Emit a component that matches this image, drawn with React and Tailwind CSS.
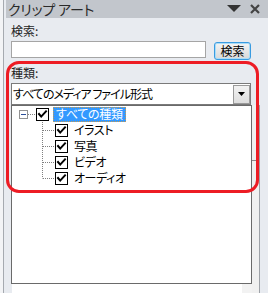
import React from "react";

const font = "font-['Noto_Sans_CJK_JP','Noto_Sans',sans-serif]";

function Check() {
  return (
    <svg width="13" height="13" viewBox="0 0 13 13" className="shrink-0">
      <rect x="0.5" y="0.5" width="12" height="12" fill="#fff" stroke="#000" />
      <polyline
        points="3,6 5.2,8.6 10,3.4"
        fill="none"
        stroke="#000"
        strokeWidth="2"
        strokeLinecap="square"
      />
    </svg>
  );
}

function Child({ label, last }) {
  return (
    <div className="flex items-center h-[16px]">
      <div className="w-[30px] shrink-0" />
      <svg width="13" height="16" viewBox="0 0 13 16" className="shrink-0">
        <line
          x1="0.5"
          y1="0"
          x2="0.5"
          y2={last ? 8.5 : 16}
          stroke="#808080"
          strokeDasharray="1 1"
        />
        <line x1="1" y1="8.5" x2="13" y2="8.5" stroke="#808080" strokeDasharray="1 1" />
      </svg>
      <Check />
      <span className="ml-[6px] text-[12px] tracking-[-0.4px] leading-none text-black">{label}</span>
    </div>
  );
}

export default function App() {
  return (
    <div
      className={`relative w-[268px] h-[293px] overflow-hidden flex bg-[#e8ebf0] ${font} [font-feature-settings:'palt']`}
    >
      {/* left edge */}
      <div className="w-[3px] bg-[#f3f4f6]" />
      <div className="w-[1px] bg-[#a6aab0]" />
      <div className="w-[2px]" />

      <div className="flex-1 flex flex-col">
        {/* title bar */}
        <div className="h-[21px] bg-[#c2c6cc] flex items-center pl-[2px] pr-[8px]">
          <span className="text-[14px] tracking-[-0.2px] text-[#2a2a2a] leading-none">
            クリップ アート
          </span>
          <div className="flex-1" />
          <svg width="14" height="8" viewBox="0 0 14 8" className="mr-[9px]">
            <polygon points="0,0 14,0 7,7" fill="#333" />
          </svg>
          <svg width="10" height="10" viewBox="0 0 10 10">
            <path d="M1 1 L9 9 M9 1 L1 9" stroke="#444" strokeWidth="2.2" />
          </svg>
        </div>

        <div className="flex flex-col pl-[5px]">
          <div className="h-[23px] flex items-end pb-[4px] text-[12px] leading-none text-[#1e1e1e]">
            検索:
          </div>
          <div className="flex items-start">
            <div className="w-[195px] h-[17px] bg-white border border-[#a5a5a5]" />
            <button className="ml-[8px] mt-[1px] w-[37px] h-[18px] rounded-[3px] border border-[#3a9be0] bg-gradient-to-b from-[#f4f4f4] to-[#d8d8d8] shadow-[inset_0_0_0_1px_#a8dcf8] text-[12px] leading-none text-black flex items-center justify-center">
              検索
            </button>
          </div>

          <div className="h-[23px] flex items-end pb-[4px] text-[12px] leading-none text-[#1e1e1e]">
            種類:
          </div>
          <div className="w-[240px] h-[22px] bg-white border border-[#7a7a7a] flex items-center">
            <span className="pl-[1px] text-[12px] tracking-[-1px] leading-none text-black">
              すべてのメディア ファイル形式
            </span>
            <div className="flex-1" />
            <div className="w-[17px] h-[19px] bg-gradient-to-b from-[#f2f2f2] to-[#dedede] border border-[#9a9a9a] flex items-center justify-center">
              <svg width="7" height="4" viewBox="0 0 7 4">
                <polygon points="0,0 7,0 3.5,4" fill="#000" />
              </svg>
            </div>
          </div>

          {/* tree + right strip */}
          <div className="flex">
            <div className="flex flex-col">
              <div className="w-[241px] h-[179px] bg-white border border-[#6a6a6a] flex flex-col">
                <div className="flex items-center h-[16px]">
                  <div className="w-[7px] shrink-0" />
                  <div className="w-[9px] h-[9px] border border-[#929292] bg-white flex items-center justify-center shrink-0">
                    <div className="w-[5px] h-[1px] bg-[#2b4f9a]" />
                  </div>
                  <svg width="8" height="16" viewBox="0 0 8 16" className="shrink-0">
                    <line x1="0" y1="8.5" x2="8" y2="8.5" stroke="#808080" strokeDasharray="1 1" />
                  </svg>
                  <Check />
                  <span className="ml-[4px] h-[15px] px-[2px] bg-[#3399ff] border border-dotted border-[#c89a50] text-white text-[12px] tracking-[-0.3px] leading-none flex items-center">
                    すべての種類
                  </span>
                </div>
                <Child label="イラスト" />
                <Child label="写真" />
                <Child label="ビデオ" />
                <Child label="オーディオ" last />
              </div>
              <div className="flex h-[9px]">
                <div className="w-[1px]" />
                <div className="w-[230px] bg-white" />
                <div className="w-[10px] bg-[#f2f2f2]" />
              </div>
            </div>
            <div className="w-[7px] bg-[#f0f0f0] flex flex-col">
              <div className="h-[55px]" />
              <div className="h-[1px] bg-[#8a8a8a]" />
            </div>
            <div className="w-[1px] bg-[#9ea2a8]" />
          </div>
        </div>
      </div>

      {/* red annotation */}
      <div className="absolute left-[6px] top-[61px] w-[253px] h-[132px] border-[3px] border-[#ed1c24] rounded-[13px] pointer-events-none" />
    </div>
  );
}
